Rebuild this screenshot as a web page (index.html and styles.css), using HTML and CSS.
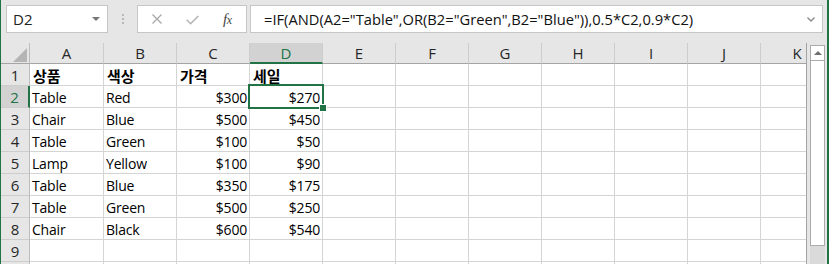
FILE: index.html
```html
<!DOCTYPE html>
<html lang="ko">
<head>
<meta charset="utf-8">
<link rel="stylesheet" href="styles.css">
</head>
<body>
<div class="app">
  <div class="toolbar">
    <div class="namebox"><span>D2</span><span class="nb-arrow"></span></div>
    <div class="grip"><i></i><i></i><i></i></div>
    <div class="fbtns">
      <svg class="ic-x" width="10" height="10" viewBox="0 0 10 10"><path d="M0.5 0.5L9.5 9.5M9.5 0.5L0.5 9.5" stroke="#a8a8a8" stroke-width="1.3" fill="none"/></svg>
      <svg class="ic-ok" width="13" height="10" viewBox="0 0 13 10"><path d="M0.7 4.8L4.6 8.7L12.3 1" stroke="#b4b4b4" stroke-width="1.6" fill="none"/></svg>
      <span class="fx">f<span class="fx-x">x</span></span>
    </div>
    <div class="formula"><span>=IF(AND(A2="Table",OR(B2="Green",B2="Blue")),0.5*C2,0.9*C2)</span>
      <svg class="chev" width="8" height="5" viewBox="0 0 8 5"><path d="M0.5 0.5L4 4L7.5 0.5" stroke="#8a8a8a" stroke-width="1.4" fill="none"/></svg>
    </div>
  </div>
  <div class="sheet">
    <div class="grid">
      <div class="row hdr"><div class="corner"></div><div>A</div><div>B</div><div>C</div><div class="sel-col">D</div><div>E</div><div>F</div><div>G</div><div>H</div><div>I</div><div>J</div><div>K</div></div>
      <div class="row"><div class="rh">1</div><div class="ko">상품</div><div class="ko">색상</div><div class="ko">가격</div><div class="ko">세일</div><div></div><div></div><div></div><div></div><div></div><div></div><div></div></div>
      <div class="row"><div class="rh sel-row">2</div><div>Table</div><div>Red</div><div class="n">$300</div><div class="n">$270</div><div></div><div></div><div></div><div></div><div></div><div></div><div></div></div>
      <div class="row"><div class="rh">3</div><div>Chair</div><div>Blue</div><div class="n">$500</div><div class="n">$450</div><div></div><div></div><div></div><div></div><div></div><div></div><div></div></div>
      <div class="row"><div class="rh">4</div><div>Table</div><div>Green</div><div class="n">$100</div><div class="n">$50</div><div></div><div></div><div></div><div></div><div></div><div></div><div></div></div>
      <div class="row"><div class="rh">5</div><div>Lamp</div><div>Yellow</div><div class="n">$100</div><div class="n">$90</div><div></div><div></div><div></div><div></div><div></div><div></div><div></div></div>
      <div class="row"><div class="rh">6</div><div>Table</div><div>Blue</div><div class="n">$350</div><div class="n">$175</div><div></div><div></div><div></div><div></div><div></div><div></div><div></div></div>
      <div class="row"><div class="rh">7</div><div>Table</div><div>Green</div><div class="n">$500</div><div class="n">$250</div><div></div><div></div><div></div><div></div><div></div><div></div><div></div></div>
      <div class="row"><div class="rh">8</div><div>Chair</div><div>Black</div><div class="n">$600</div><div class="n">$540</div><div></div><div></div><div></div><div></div><div></div><div></div><div></div></div>
      <div class="row"><div class="rh">9</div><div></div><div></div><div></div><div></div><div></div><div></div><div></div><div></div><div></div><div></div><div></div></div>
      <div class="row"><div class="rh"></div><div></div><div></div><div></div><div></div><div></div><div></div><div></div><div></div><div></div><div></div><div></div></div>
    </div>
    <div class="vscroll">
      <div class="up"><span class="up-tri"></span></div>
      <div class="thumb"></div>
    </div>
    <div class="selection"><div class="handle"></div></div>
  </div>
</div>
</body>
</html>
```

FILE: styles.css
```css
* { box-sizing: border-box; }

body {
  margin: 0;
  width: 829px;
  height: 264px;
  overflow: hidden;
  background: #e6e6e6;
}

.app {
  height: 264px;
  border-left: 1px solid #217346;
  border-right: 2px solid #217346;
  background: #e6e6e6;
  display: flex;
  flex-direction: column;
  overflow: hidden;
}

.toolbar {
  flex: none;
  height: 43px;
  display: flex;
  align-items: flex-start;
  padding-top: 5px;
}

.namebox {
  margin-left: 5px;
  width: 102px;
  height: 28px;
  background: #fff;
  border: 1px solid #c6c6c6;
  display: flex;
  align-items: center;
  padding-left: 6px;
  font: 15px "Open Sans", sans-serif;
  color: #222;
}

.nb-arrow {
  margin-left: auto;
  margin-right: 7px;
  width: 0;
  height: 0;
  border-left: 4px solid transparent;
  border-right: 4px solid transparent;
  border-top: 4px solid #777;
}

.grip {
  margin-left: 14px;
  margin-top: 9px;
  display: flex;
  flex-direction: column;
  gap: 2px;
}

.grip i {
  display: block;
  width: 2px;
  height: 2px;
  background: #b8b8b8;
}

.fbtns {
  margin-left: 13px;
  width: 110px;
  height: 28px;
  background: #fff;
  border: 1px solid #c6c6c6;
  display: flex;
  align-items: center;
  padding-left: 14px;
}

.ic-ok { margin-left: 24px; margin-top: 2px; }

.fx {
  margin-left: 24px;
  font: italic 15px "Liberation Serif", serif;
  color: #444;
  letter-spacing: -0.5px;
}

.fx-x { font-size: 12px; }

.formula {
  margin-left: 3px;
  width: 573px;
  height: 28px;
  background: #fff;
  border: 1px solid #c6c6c6;
  display: flex;
  align-items: center;
  padding-left: 13px;
  padding-right: 7px;
  font: 14.7px "Open Sans", sans-serif;
  color: #111;
  white-space: nowrap;
}

.chev { margin-left: auto; }

.sheet {
  flex: 1;
  display: flex;
  position: relative;
  overflow: hidden;
}

.grid {
  flex: none;
  width: 806px;
  border-right: 1px solid #a3a3a3;
  overflow: hidden;
  background: #fff;
}

.row {
  display: flex;
  height: 22px;
}

.row > div {
  flex: none;
  width: 73px;
  height: 100%;
  border-right: 1px solid #d4d4d4;
  border-bottom: 1px solid #d4d4d4;
  padding: 2px 2px 0 2px;
  font: 14px "Open Sans", sans-serif;
  letter-spacing: -0.2px;
  line-height: 19px;
  color: #000;
  white-space: nowrap;
}

.row > div:first-child { width: 29px; }
.row > div:nth-child(2) { width: 74px; }

.row > .n { text-align: right; }

.row > .ko {
  font-family: "Noto Sans CJK KR", sans-serif;
  font-weight: 700;
  font-size: 15px;
  letter-spacing: 0;
  padding-left: 3px;
}

.row.hdr { height: 21px; }

.row.hdr > div {
  background: #e6e6e6;
  border-right-color: #cdcdcd;
  border-bottom-color: #a5a5a5;
  padding: 0;
  text-align: center;
  font-size: 15px;
  letter-spacing: 0;
  line-height: 20px;
  color: #262626;
}

.row > .rh {
  background: #e6e6e6;
  border-right-color: #bdbdbd;
  border-bottom-color: #cdcdcd;
  padding: 1px 0 0 0;
  text-align: center;
  font-size: 15px;
  letter-spacing: 0;
  line-height: 20px;
  color: #262626;
}

.row.hdr > .corner {
  position: relative;
  border-right-color: #bdbdbd;
}

.corner::after {
  content: "";
  position: absolute;
  right: 2px;
  bottom: 1px;
  width: 0;
  height: 0;
  border-left: 14px solid transparent;
  border-bottom: 14px solid #b5b5b5;
}

.row.hdr > .sel-col {
  background: #d2d2d2;
  color: #217346;
  border-bottom: 2px solid #217346;
}

.row > .sel-row {
  background: #d2d2d2;
  color: #217346;
  border-right: 2px solid #217346;
}

.vscroll {
  flex: none;
  width: 15px;
  margin-left: 3px;
  margin-top: 2px;
  background: #dadada;
  display: flex;
  flex-direction: column;
}

.up {
  height: 16px;
  background: #fff;
  border: 1px solid #ababab;
  display: flex;
  align-items: center;
  justify-content: center;
}

.up-tri {
  width: 0;
  height: 0;
  border-left: 4px solid transparent;
  border-right: 4px solid transparent;
  border-bottom: 4px solid #6f6f6f;
}

.thumb {
  height: 185px;
  background: #fff;
  border: 1px solid #ababab;
  border-top: none;
}

.selection {
  position: absolute;
  left: 247px;
  top: 41px;
  width: 76px;
  height: 25px;
  border: 2px solid #217346;
}

.handle {
  position: absolute;
  right: -5px;
  bottom: -5px;
  width: 8px;
  height: 8px;
  background: #217346;
  border: 1px solid #fff;
}
```
